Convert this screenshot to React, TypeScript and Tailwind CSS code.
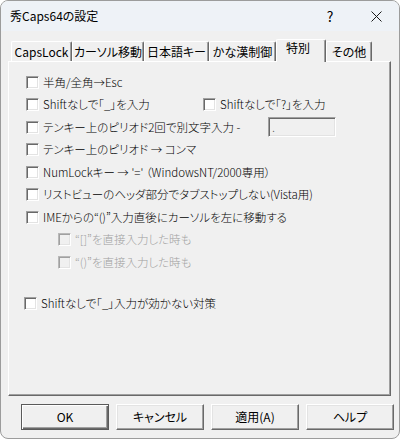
import React from "react";

function Box({ disabled }: { disabled?: boolean }) {
  return (
    <span
      className={
        disabled
          ? "inline-block w-[13px] h-[13px] shrink-0 border border-t-[#b8b8b8] border-l-[#b8b8b8] border-r-white border-b-white bg-[#f0f0f0] shadow-[inset_1px_1px_0_#a0a0a0,inset_-1px_-1px_0_#e3e3e3]"
          : "inline-block w-[13px] h-[13px] shrink-0 border border-t-[#a0a0a0] border-l-[#a0a0a0] border-r-white border-b-white bg-white shadow-[inset_1px_1px_0_#696969,inset_-1px_-1px_0_#e3e3e3]"
      }
    />
  );
}

function Tab({ label, w, selected }: { label: string; w: string; selected?: boolean }) {
  return (
    <div
      className={
        selected
          ? `${w} h-[23px] -mb-px relative z-10 bg-[#f0f0f0] border-t border-l border-t-white border-l-white border-r border-r-[#696969] shadow-[inset_-1px_0_0_#a0a0a0] rounded-t-[2px] flex items-start justify-center pt-[2px] pr-[6px]`
          : `${w} h-[20px] bg-[#f0f0f0] border-t border-l border-t-white border-l-white border-r border-r-[#696969] shadow-[inset_-1px_0_0_#a0a0a0] rounded-t-[2px] flex items-center justify-center pt-[1px]`
      }
    >
      <span className="text-[12px] leading-none text-black">{label}</span>
    </div>
  );
}

function Btn({ label, def }: { label: string; def?: boolean }) {
  return (
    <div
      className={
        def
          ? "w-[88px] h-[26px] border border-[#5a5a5a] bg-[#f0f0f0] shadow-[inset_1px_1px_0_#ffffff,inset_-1px_-1px_0_#696969,inset_-2px_-2px_0_#a0a0a0] flex items-center justify-center text-[12px] text-black"
          : "w-[88px] h-[26px] border border-t-white border-l-white border-r-[#696969] border-b-[#696969] bg-[#f0f0f0] shadow-[inset_-1px_-1px_0_#a0a0a0,inset_1px_1px_0_#e3e3e3] flex items-center justify-center text-[12px] text-black"
      }
    >
      {label}
    </div>
  );
}

export default function App() {
  return (
    <div className="w-[400px] h-[439px] bg-white">
      <div className="w-[400px] h-[439px] box-border border border-[#9c9c9c] rounded-[8px] overflow-hidden bg-[#f0f0f0] flex flex-col font-['Noto_Sans_CJK_JP','Noto_Sans',sans-serif] [font-feature-settings:'palt'] text-black">
        {/* title bar */}
        <div className="h-[30px] shrink-0 bg-[#eef2f7] flex items-center pl-[9px]">
          <span className="text-[12px] leading-none">秀Caps64の設定</span>
          <div className="flex-1" />
          <span className="w-[46px] flex justify-center text-[14px] leading-none">?</span>
          <span className="w-[46px] h-[30px] flex items-center justify-center">
            <svg width="11" height="11" viewBox="0 0 11 11">
              <path d="M0.5 0.5 L10.5 10.5 M10.5 0.5 L0.5 10.5" stroke="#1a1a1a" strokeWidth="1" />
            </svg>
          </span>
        </div>

        {/* tabs */}
        <div className="mt-[8px] ml-[10px] h-[22px] flex items-end">
          <Tab w="w-[61px]" label="CapsLock" />
          <Tab w="w-[72px]" label="カーソル移動" />
          <Tab w="w-[65px]" label="日本語キー" />
          <Tab w="w-[67px]" label="かな漢制御" />
          <Tab w="w-[50px]" label="特別" selected />
          <Tab w="w-[46px]" label="その他" />
        </div>

        {/* panel */}
        <div className="ml-[7px] w-[383px] h-[335px] border border-t-white border-l-white border-r-[#696969] border-b-[#696969] shadow-[inset_-1px_-1px_0_#a0a0a0] pt-[9px] text-[11.5px] leading-none font-light">
          <div className="h-[22.5px] flex items-center pl-[17px] gap-[4px]">
            <Box />
            <span>半角/全角→Esc</span>
          </div>
          <div className="h-[22.5px] flex items-center pl-[17px]">
            <div className="w-[177px] flex items-center gap-[4px]">
              <Box />
              <span>Shiftなしで「_」を入力</span>
            </div>
            <div className="flex items-center gap-[4px]">
              <Box />
              <span>Shiftなしで「?」を入力</span>
            </div>
          </div>
          <div className="h-[22.5px] flex items-center pl-[17px]">
            <div className="w-[242px] flex items-center gap-[4px]">
              <Box />
              <span>テンキー上のピリオド2回で別文字入力 -</span>
            </div>
            <div className="w-[68px] h-[20px] border border-t-[#a0a0a0] border-l-[#a0a0a0] border-r-white border-b-white bg-[#f0f0f0] shadow-[inset_1px_1px_0_#696969,inset_-1px_-1px_0_#e3e3e3] pl-[3px] flex items-center text-[12px] text-[#444]">
              .
            </div>
          </div>
          <div className="h-[22.5px] flex items-center pl-[17px] gap-[4px]">
            <Box />
            <span>テンキー上のピリオド → コンマ</span>
          </div>
          <div className="h-[22.5px] flex items-center pl-[17px] gap-[4px]">
            <Box />
            <span>NumLockキー → '=' （WindowsNT/2000専用）</span>
          </div>
          <div className="h-[22.5px] flex items-center pl-[17px] gap-[4px]">
            <Box />
            <span>リストビューのヘッダ部分でタブストップしない(Vista用)</span>
          </div>
          <div className="h-[22.5px] flex items-center pl-[17px] gap-[4px]">
            <Box />
            <span>IMEからの“()”入力直後にカーソルを左に移動する</span>
          </div>
          <div className="h-[22.5px] flex items-center pl-[49px] gap-[4px] text-[#a0a0a0]">
            <Box disabled />
            <span>“[]”を直接入力した時も</span>
          </div>
          <div className="h-[22.5px] flex items-center pl-[49px] gap-[4px] text-[#a0a0a0]">
            <Box disabled />
            <span>“()”を直接入力した時も</span>
          </div>
          <div className="mt-[18.5px] h-[22.5px] flex items-center pl-[15px] gap-[4px]">
            <Box />
            <span>Shiftなしで「_」入力が効かない対策</span>
          </div>
        </div>

        {/* buttons */}
        <div className="mt-[8px] ml-[20px] flex gap-[7px]">
          <Btn label="OK" def />
          <Btn label="キャンセル" />
          <Btn label="適用(A)" />
          <Btn label="ヘルプ" />
        </div>
      </div>
    </div>
  );
}
